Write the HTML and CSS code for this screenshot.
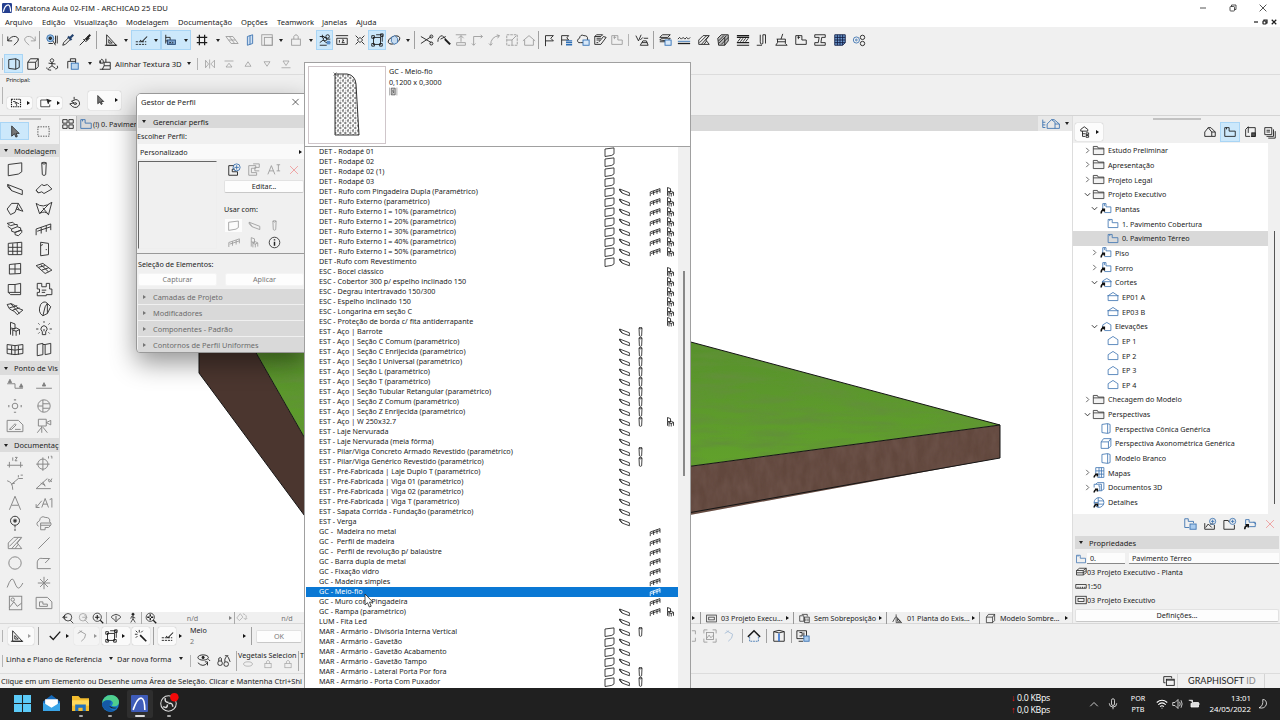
FILE: index.html
```html
<!DOCTYPE html>
<html lang="pt-BR">
<head>
    <meta charset="UTF-8">
    <meta name="viewport" content="width=device-width, initial-scale=1.0">
    <title>Maratona Aula 02-FIM - ARCHICAD 25 EDU</title>
    <link rel="stylesheet" href="styles.css">
</head>
<body>
    <div class="titlebar">
        <i data-icon="app" class="app-icon"></i>
        <span class="title">Maratona Aula 02-FIM - ARCHICAD 25 EDU</span>
        <div class="window-buttons"><i data-icon="minimize"></i><i data-icon="restore"></i><i data-icon="close"></i></div>
    </div>
    <div class="menubar">
        <span class="m1">Arquivo</span><span class="m2">Edição</span><span class="m3">Visualização</span><span class="m4">Modelagem</span><span class="m5">Documentação</span><span class="m6">Opções</span><span class="m7">Teamwork</span><span class="m8">Janelas</span><span class="m9">Ajuda</span>
        <div class="doc-buttons"><i data-icon="minimize"></i><i data-icon="restore"></i><i data-icon="close"></i></div>
    </div>

    <div class="toolbar">
        <b class="grip"></b>
        <div class="group g-undo"><i data-icon="undo"></i><i data-icon="redo" class="off"></i></div>
        <b class="sep"></b>
        <div class="group g-pick"><i data-icon="find"></i><i data-icon="dropper"></i><i data-icon="syringe"></i></div>
        <b class="sep"></b>
        <div class="group g-split"><i data-icon="setsquare"></i><u></u></div>
        <div class="group g-split on"><i data-icon="guide"></i><u></u></div>
        <div class="group g-split on"><i data-icon="snap"></i><u></u></div>
        <div class="group g-split wide"><i data-icon="grid"></i><u></u></div>
        <div class="group g-planes"><i data-icon="plane" class="off"></i><i data-icon="planev" class="blue"></i><i data-icon="frame" class="off"></i></div>
        <u></u>
        <div class="group g-split"><i data-icon="lock" class="off"></i><u></u></div>
        <div class="group g-snap"><i data-icon="trace" class="on"></i><i data-icon="ruler12"></i><i data-icon="corners"></i><i data-icon="group" class="on"></i><i data-icon="orbit"></i></div>
        <u></u>
        <b class="sep"></b>
        <div class="group g-edit"><i data-icon="scissors"></i><i data-icon="adjust"></i><i data-icon="raise" class="off"></i><i data-icon="corner" class="off"></i><i data-icon="arc" class="off"></i><i data-icon="resize" class="off"></i><i data-icon="house" class="off"></i></div>
        <b class="sep"></b>
        <div class="group g-flag"><i data-icon="flag"></i><i data-icon="flaglist"></i><i data-icon="cloud"></i><i data-icon="marker"></i><i data-icon="plan" class="off"></i></div>
        <b class="grip small"></b>
        <div class="group g-one"><i data-icon="vcheck"></i></div>
        <b class="sep"></b>
        <div class="group g-attr"><i data-icon="layers"></i><i data-icon="lines"></i><i data-icon="hatch"></i><i data-icon="hatchcube"></i><i data-icon="composite"></i><i data-icon="profile"></i><i data-icon="brush"></i><i data-icon="plan"></i><i data-icon="ibeam"></i><i data-icon="table"></i><i data-icon="gears"></i></div>
    </div>

    <div class="toolbar second">
        <b class="grip"></b>
        <div class="group g-view"><i data-icon="persp" class="on"></i><i data-icon="box"></i><i data-icon="walk"></i></div>
        <div class="group g-doc"><i data-icon="docview"></i></div>
        <u></u>
        <i data-icon="paint" class="paint"></i>
        <span class="texture">Alinhar Textura 3D</span><u></u>
        <b class="grip later"></b>
        <div class="group g-align off"><i data-icon="mirror"></i><i data-icon="top"></i><i data-icon="up"></i><i data-icon="down"></i><i data-icon="bottom"></i></div>
    </div>

    <div class="infobox">
        <span class="caption">Principal:</span>
        <div class="info-row">
            <b class="grip tall"></b>
            <div class="info-btn"><i data-icon="selection"></i><s></s></div>
            <div class="info-btn"><i data-icon="rectsel"></i><s></s></div>
            <i data-icon="magnet" class="magnet"></i>
            <div class="info-btn big"><i data-icon="cursor"></i><s></s></div>
        </div>
    </div>

    <div class="main">
        <div class="toolbox">
            <div class="handle"></div>
            <div class="tool-grid select"><i data-icon="cursor" class="on"></i><i data-icon="marquee"></i></div>
            <div class="tool-head first"><u></u>Modelagem</div>
            <div class="tool-grid">
                <i data-icon="wall"></i><i data-icon="column"></i>
                <i data-icon="beam"></i><i data-icon="slab"></i>
                <i data-icon="roof"></i><i data-icon="shell"></i>
                <i data-icon="stair"></i><i data-icon="rail"></i>
                <i data-icon="curtain"></i><i data-icon="door"></i>
                <i data-icon="window"></i><i data-icon="skylight"></i>
                <i data-icon="cornerwin"></i><i data-icon="zone"></i>
                <i data-icon="mesh"></i><i data-icon="morph"></i>
                <i data-icon="chair"></i><i data-icon="lamp"></i>
                <i data-icon="curtain2"></i><i data-icon="opening"></i>
            </div>
            <div class="tool-head"><u></u>Ponto de Vis</div>
            <div class="tool-grid grey">
                <i data-icon="section"></i><i data-icon="elevation"></i>
                <i data-icon="interior"></i><i data-icon="detail"></i>
                <i data-icon="worksheet"></i><i data-icon="camera"></i>
            </div>
            <div class="tool-head"><u></u>Documentaç</div>
            <div class="tool-grid grey">
                <i data-icon="dimension"></i><i data-icon="level"></i>
                <i data-icon="radial"></i><i data-icon="angle"></i>
                <i data-icon="text"></i><i data-icon="label"></i>
                <i data-icon="pin"></i><i data-icon="change"></i>
                <i data-icon="hatch"></i><i data-icon="line"></i>
                <i data-icon="circle"></i><i data-icon="polyline"></i>
                <i data-icon="spline"></i><i data-icon="hotspot"></i>
                <i data-icon="figure"></i><i data-icon="drawing"></i>
            </div>
        </div>

        <div class="workspace">
            <div class="tabbar">
                <i data-icon="tiles" class="tiles"></i>
                <div class="tab"><i data-icon="folderplan" class="blue"></i>(!) 0. Pavimen</div>
                <div class="tab-end"><i data-icon="city" class="blue"></i><u></u></div>
            </div>
            <svg class="canvas" viewBox="60 131 1012 481">
                <defs>
                    <filter id="grassNoise" x="0" y="0" width="100%" height="100%">
                        <feTurbulence type="fractalNoise" baseFrequency="0.02 0.12" numOctaves="4" seed="4"/>
                        <feColorMatrix values="0 0 0 0 0.12  0 0 0 0 0.28  0 0 0 0 0.04  0 2.1 0 0 -0.74"/>
                        <feComposite in2="SourceGraphic" operator="in"/>
                    </filter>
                    <filter id="soilNoise" x="0" y="0" width="100%" height="100%">
                        <feTurbulence type="fractalNoise" baseFrequency="0.12 0.05" numOctaves="3" seed="8"/>
                        <feColorMatrix values="0 0 0 0 0.2  0 0 0 0 0.12  0 0 0 0 0.1  0 .7 0 0 -0.2"/>
                        <feComposite in2="SourceGraphic" operator="in"/>
                    </filter>
                    <linearGradient id="grass" x1="0" y1="0" x2="0" y2="1">
                        <stop offset="0" stop-color="#568f2c"/>
                        <stop offset="1" stop-color="#65a82b"/>
                    </linearGradient>
                </defs>
                <g stroke-linejoin="round">
                    <path d="M199 330V373L347 573V512L243 330Z" fill="#4b362f"/>
                    <path d="M347 512L1000 425V458L347 578Z" fill="#61473d"/>
                    <path d="M347 512L1000 425V458L347 578Z" filter="url(#soilNoise)"/>
                    <path d="M243 330L347 512L1000 425L646 330Z" fill="url(#grass)"/>
                    <path d="M243 330L347 512L1000 425L646 330Z" filter="url(#grassNoise)"/>
                    <path d="M199 330V373L347 573L1000 458V425L646 330M243 330L347 512L1000 425M347 512V573" fill="none" stroke="#151515" stroke-width="1"/>
                </g>
            </svg>
            <div class="navbar">
                <div class="nav-icons n1"><i data-icon="zoomback"></i><i data-icon="zoomnext" class="off"></i><i data-icon="zoomin"></i></div>
                <div class="nav-icons n2"><i data-icon="orbit3d"></i><i data-icon="person"></i></div>
                <div class="nav-icons n3"><i data-icon="fit"></i></div>
                <div class="nav-value nd1"><span>n/d</span><s></s></div>
                <div class="nav-value nd2"><i data-icon="rotate"></i><span>n/d</span></div>
                <div class="nav-fill"><s></s></div>
                <div class="nav-option"><i data-icon="frame2"></i><span>03 Projeto Execu...</span><s></s></div>
                <div class="nav-option"><i data-icon="override"></i><span>Sem Sobreposição</span><s></s></div>
                <div class="nav-option"><i data-icon="reno"></i><span>01 Planta do Exis...</span><s></s></div>
                <div class="nav-option"><i data-icon="box"></i><span>Modelo Sombre...</span><s></s></div>
            </div>
        </div>

        <div class="navigator">
            <div class="handle"></div>
            <div class="nav-head">
                <div class="nav-btn"><i data-icon="treeview"></i><s></s></div>
                <div class="nav-tabs"><i data-icon="city2"></i><i data-icon="folderplan" class="on"></i><i data-icon="layout"></i><i data-icon="book"></i></div>
            </div>
            <div class="tree-wrap">
                <div class="tree" id="tree"></div>
                <div class="tree-scroll"><div class="tree-thumb"></div></div>
            </div>
            <div class="tree-actions"><i data-icon="newview"></i><i data-icon="savehouse"></i><i data-icon="newfolder"></i><i data-icon="clone"></i><i data-icon="close" class="red"></i></div>
            <div class="props-head"><u></u>Propriedades</div>
            <div class="props-row first"><i data-icon="folderplan" class="blue"></i><span class="field id">0.</span><span class="field">Pavimento Térreo</span></div>
            <div class="props-row"><i data-icon="layers2"></i>03 Projeto Executivo - Planta</div>
            <div class="props-row"><i data-icon="scale"></i>1:50</div>
            <div class="props-row"><i data-icon="frame2"></i>03 Projeto Executivo</div>
            <div class="button defs">Definições...</div>
        </div>
    </div>

    <div class="control">
        <b class="grip"></b>
        <div class="ctl-btn c1"><i data-icon="setsquare"></i><s class="off"></s></div>
        <b class="sep"></b>
        <div class="ctl-flat"><i data-icon="check"></i><s></s></div>
        <div class="ctl-btn off"><i data-icon="curve"></i><s></s></div>
        <div class="ctl-btn c3"><i data-icon="group"></i><s></s></div>
        <div class="ctl-btn c4"><i data-icon="wand"></i></div>
        <b class="sep"></b>
        <div class="ctl-btn c5"><i data-icon="guide"></i></div><div class="ctl-arrow"><s></s></div>
        <div class="half">Meio<br><em>2</em></div>
        <div class="ctl-arrow"><s></s></div>
        <b class="sep"></b>
        <div class="button ok">OK</div>
        <div class="control-right">
            <i data-icon="frag" class="off"></i><i data-icon="fitbox" class="off"></i><i data-icon="curve" class="off blue"></i>
            <b class="sep"></b><i data-icon="roofline"></i><b class="sep"></b><i data-icon="pipe"></i><b class="sep"></b><i data-icon="panelview"></i>
        </div>
    </div>
    <div class="control lower">
        <b class="grip"></b>
        <span class="ref">Linha e Plano de Referência</span><u></u>
        <span class="shape">Dar nova forma</span><u></u>
        <b class="grip veg-grip"></b>
        <i data-icon="eye" class="big"></i><i data-icon="locks" class="big"></i>
        <div class="veg"><span>Vegetais Selecion</span><div class="off"><i data-icon="oval"></i><i data-icon="lock"></i><i data-icon="lock"></i></div></div>
        <div class="veg last"><span>T</span></div>
    </div>
    <div class="status">
        <span class="hint">Clique em um Elemento ou Desenhe uma Área de Seleção. Clicar e Mantenha Ctrl+Shi</span>
        <i data-icon="windows2"></i>
        <span class="brand">GRAPHISOFT <em>ID</em></span>
    </div>

    <div class="taskbar">
        <div class="task-apps">
            <i data-icon="start"></i><i data-icon="mail"></i><i data-icon="explorer" class="run"></i><i data-icon="edge" class="run"></i><i data-icon="archicad" class="run active"></i><i data-icon="obs" class="run"></i>
        </div>
        <div class="net"><div><em>↓</em>0.0 KBps</div><div><em>↑</em>0,0 KBps</div></div>
        <i data-icon="chevup" class="t-chev"></i><i data-icon="mic" class="t-mic"></i>
        <div class="lang">POR<br>PTB</div>
        <div class="tray"><i data-icon="wifi"></i><i data-icon="sound"></i><i data-icon="battery"></i></div>
        <div class="clock">13:01<br>24/05/2022</div>
        <i data-icon="moon" class="t-moon"></i>
    </div>

    <div class="palette">
        <div class="palette-title">Gestor de Perfil<i data-icon="close"></i></div>
        <div class="palette-head"><u></u>Gerenciar perfis</div>
        <div class="palette-label">Escolher Perfil:</div>
        <div class="palette-select">Personalizado<s></s></div>
        <div class="palette-body">
            <div class="preview"></div>
            <div class="palette-side">
                <div class="side-icons"><i data-icon="profnew"></i><i data-icon="profdup" class="off"></i><i data-icon="rename" class="off"></i><i data-icon="close" class="red"></i></div>
                <div class="button">Editar...</div>
                <div class="use-label">Usar com:</div>
                <div class="use-grid"><i data-icon="wall" class="sel"></i><i data-icon="beam"></i><i data-icon="column"></i><i data-icon="rail"></i><i data-icon="chair"></i><i data-icon="info" class="dark"></i></div>
            </div>
        </div>
        <div class="palette-elements">Seleção de Elementos:</div>
        <div class="palette-buttons"><div class="button">Capturar</div><div class="button">Aplicar</div></div>
        <div class="fold"><s></s>Camadas de Projeto</div>
        <div class="fold"><s></s>Modificadores</div>
        <div class="fold"><s></s>Componentes - Padrão</div>
        <div class="fold"><s></s>Contornos de Perfil Uniformes</div>
    </div>

    <div class="popup">
        <div class="popup-head">
            <svg class="thumb" viewBox="0 0 76 76">
                <defs>
                    <pattern id="concrete" width="5" height="5" patternUnits="userSpaceOnUse">
                        <path d="M0 1L2 0L2 2ZM3 3L5 2.500L4 5ZM1 4H2M4 .5V1" fill="#aaa" stroke="#555" stroke-width=".5"/>
                    </pattern>
                </defs>
                <path d="M26 7H38Q46 8 47 17L50 68H26Z" fill="url(#concrete)" stroke="#333" stroke-width="1"/>
                <path d="M24.500 5.500L27.500 8.500M27.500 5.500L24.500 8.500" stroke="#333" stroke-width=".6"/>
            </svg>
            <div class="popup-info">
                <div>GC - Meio-fio</div>
                <div>0,1200 x 0,3000</div>
                <i data-icon="section-mark"></i>
            </div>
        </div>
        <div class="popup-body">
            <div class="profiles" id="profiles"></div>
            <div class="popup-scroll"><div class="popup-thumb"></div></div>
        </div>
        <svg class="pointer" viewBox="0 0 10 15"><path d="M1 1V12L3.500 9.700L5.300 14L7.200 13.200L5.500 9.200H9Z" fill="#fff" stroke="#222" stroke-width=".8"/></svg>
    </div>

    <script src="script.js"></script>
</body>
</html>
```

FILE: styles.css
```css
* {
    box-sizing: border-box;
}
body {
    margin: 0;
    width: 1280px;
    height: 720px;
    overflow: hidden;
    display: flex;
    flex-direction: column;
    position: relative;
    background: #f0f0f0;
    color: #1c1c1c;
    font-family: "Noto Sans", "Open Sans", sans-serif;
    font-size: 7.2px;
    line-height: 10px;
    white-space: nowrap;
}
i {
    display: flex;
    flex: none;
    align-items: center;
    justify-content: center;
    font-style: normal;
}
i svg {
    width: 14px;
    height: 14px;
    fill: none;
    stroke: currentColor;
    stroke-width: 1;
    display: block;
}
em {
    font-style: normal;
}
/* arrow down */
u {
    flex: none;
    width: 10px;
    display: flex;
    justify-content: center;
    align-items: center;
}
u::before {
    content: "";
    border: 2.5px solid transparent;
    border-top: 3.5px solid #222;
    border-bottom: 0;
}
/* arrow right */
s {
    flex: none;
    width: 8px;
    display: flex;
    justify-content: center;
    align-items: center;
}
s::before {
    content: "";
    border: 2.5px solid transparent;
    border-left: 3px solid #111;
    border-right: 0;
}
.off {
    opacity: .4;
}
.blue {
    color: #3c72b0;
}
.red {
    color: #ef9a9a;
}
.on {
    background: #cce8fb;
    outline: 1px solid #a9d5f5;
    outline-offset: -1px;
}
.sep {
    flex: none;
    width: 1px;
    height: 18px;
    background: #a0a0a0;
}
.grip {
    flex: none;
    width: 1px;
    height: 12px;
    margin: 0 2px;
    background: #b4b4b4;
}
.button {
    background: #fdfdfd;
    border: 1px solid #e2e2e2;
    border-bottom-color: #c8c8c8;
    border-radius: 2px;
    height: 13px;
    line-height: 11px;
    text-align: center;
}

/* title and menu */
.titlebar {
    flex: none;
    height: 15px;
    background: #fff;
    display: flex;
    align-items: center;
    font-size: 7.7px;
}
.app-icon {
    margin: 0 3px 0 2px;
}
.app-icon svg {
    width: 10px;
    height: 10px;
}
.window-buttons {
    margin-left: auto;
    display: flex;
    gap: 16px;
    margin-right: 10px;
}
.window-buttons svg {
    height: 12px;
}
.menubar {
    flex: none;
    height: 12px;
    background: #fff;
    display: flex;
    align-items: center;
    line-height: 12px;
    font-size: 7.6px;
    padding: 1px 0 0 5px;
}
.m1 { width: 37px; }
.m2 { width: 32px; }
.m3 { width: 52px; }
.m4 { width: 52px; }
.m5 { width: 63px; }
.m6 { width: 36px; }
.m7 { width: 45px; }
.m8 { width: 34px; }
.doc-buttons {
    margin-left: auto;
    display: flex;
    gap: 1px;
    margin-right: 2px;
}
.doc-buttons svg {
    width: 8px;
    height: 8px;
    stroke-width: 2.4;
}

/* toolbars */
.toolbar {
    flex: none;
    height: 26px;
    display: flex;
    align-items: center;
}
.group {
    flex: none;
    display: flex;
    height: 20px;
    align-items: stretch;
}
.group > i {
    flex: 1;
}
.g-undo { width: 33px; }
.g-pick { width: 54px; padding: 0 2px 0 3px; }
.g-split { width: 30px; }
.g-split.wide { width: 32px; }
.toolbar .sep + .g-split { margin-left: 3px; width: 30px; }
.g-planes { width: 53px; }
.g-snap { width: 87px; }
.toolbar > .sep { margin: 0 1px; }
.g-edit { width: 118px; margin-left: 3px; }
.g-flag { width: 86px; padding-right: 1px; }
.g-one { width: 21px; }
.g-attr { width: 214px; }
.second {
    height: 21px;
}
.second .group {
    height: 19px;
}
.g-view { width: 57px; margin-left: -1px; }
.g-doc { width: 24px; }
.paint {
    width: 19px;
}
.texture {
    font-size: 7.7px;
    width: 69px;
    margin-left: 1px;
}
.later {
    margin-left: 3px;
}
.g-align {
    width: 96px;
}
.g-align svg {
    width: 12px;
}
.infobox {
    flex: none;
    height: 42px;
    border-top: 1px solid #dcdcdc;
    border-bottom: 1px solid #d4d4d4;
}
.caption {
    display: block;
    padding-left: 6px;
    font-size: 6px;
    letter-spacing: -.2px;
    line-height: 11px;
}
.info-row {
    display: flex;
    align-items: center;
    height: 28px;
}
.tall {
    height: 17px;
    margin-top: -10px;
}
.info-btn {
    display: flex;
    align-items: center;
    width: 25px;
    height: 12px;
    margin: 5px 3px 0 2px;
    background: #fbfbfb;
    border-radius: 2px;
    box-shadow: 0 0 1px #999;
}
.info-btn i {
    width: 17px;
}
.info-btn svg {
    height: 12px;
}
.magnet {
    width: 20px;
    margin: 5px 3px 0 0;
}
.info-btn.big {
    width: 33px;
    height: 19px;
    margin: 0;
}
.info-btn.big i {
    width: 24px;
}

/* main area */
.main {
    flex: none;
    height: 508px;
    display: flex;
    border-bottom: 1px solid #d8d8d8;
}
.toolbox {
    width: 60px;
    border-right: 1px solid #dcdcdc;
    overflow: hidden;
}
.handle {
    width: 22px;
    height: 2px;
    margin: 2px auto 0;
    background: #c2c2c2;
}
.tool-grid {
    display: grid;
    grid-template-columns: 29px 29px;
    grid-auto-rows: 20px;
    margin-bottom: 2px;
    color: #333;
}
.tool-grid svg {
    width: 18px;
    height: 18px;
    stroke-width: .85;
}
.tool-grid.grey {
    color: #858585;
    margin-top: 1px;
}
.tool-grid.select {
    grid-auto-rows: 18px;
    margin: 2px 0 4px;
}
.select svg {
    width: 15px;
    height: 15px;
}
.tool-head {
    height: 14px;
    display: flex;
    align-items: center;
    background: #dcdcdc;
    overflow: hidden;
    padding-left: 1px;
    font-size: 7.5px;
}
.tool-head.first {
    height: 13px;
    margin-bottom: 2px;
}
.tool-head u {
    margin-right: 3px;
}
.workspace {
    width: 1012px;
    display: flex;
    flex-direction: column;
}
.tabbar {
    height: 15px;
    display: flex;
    flex: none;
}
.tiles {
    width: 17px;
    border-right: 1px solid #bbb;
}
.tab {
    flex: 1;
    background: #d9d9d9;
    display: flex;
    align-items: center;
    font-size: 7.2px;
    padding-left: 2px;
}
.tab-end {
    width: 34px;
    display: flex;
    align-items: center;
    justify-content: space-between;
    background: #e8e8e8;
    padding-left: 4px;
}
.tab-end svg {
    width: 19px;
}
.canvas {
    width: 1012px;
    height: 481px;
    flex: none;
    background: #fff;
}
.navbar {
    flex: 1;
    display: flex;
    align-items: center;
}
.nav-icons {
    display: flex;
    height: 12px;
    border-right: 1px solid #aaa;
}
.nav-icons i {
    flex: 1;
}
.nav-icons svg {
    width: 12px;
    height: 12px;
}
.n1 { width: 47px; }
.n2 { width: 35px; }
.n3 { width: 17px; border: 0; }
.nav-value {
    display: flex;
    align-items: center;
    height: 12px;
    color: #777;
}
.nav-value span {
    flex: 1;
    text-align: center;
}
.nd1 { width: 76px; border-right: 1px solid #aaa; }
.nd2 { width: 90px; }
.nd1 s, .nd2 i { opacity: .5; }
.nav-fill {
    flex: 1;
    display: flex;
    justify-content: flex-end;
    padding-right: 3px;
}
.nav-option {
    width: 93px;
    height: 12px;
    border-left: 1px solid #999;
    display: flex;
    align-items: center;
    padding-left: 5px;
}
.nav-option span {
    width: 66px;
    padding-left: 4px;
}
.nav-option svg {
    width: 11px;
    height: 11px;
}

/* navigator */
.navigator {
    width: 208px;
    border-left: 1px solid #ddd;
}
.navigator .handle {
    width: 48px;
}
.nav-head {
    display: flex;
    align-items: center;
    justify-content: space-between;
    height: 23px;
}
.nav-btn {
    width: 28px;
    height: 18px;
    margin-left: 2px;
    display: flex;
    align-items: center;
    padding-left: 4px;
    background: #fcfcfc;
    border-radius: 2px;
    box-shadow: 0 0 1px #999;
}
.nav-tabs {
    display: flex;
}
.nav-tabs i {
    width: 20px;
    height: 20px;
}
.tree-wrap {
    display: flex;
    height: 371px;
}
.tree {
    width: 195px;
    background: #fff;
}
.tree-row {
    height: 14.67px;
    display: flex;
    align-items: center;
    font-size: 7.2px;
}
.tree-row.current {
    background: #d9d9d9;
}
.level0 { padding-left: 9px; }
.level1 { padding-left: 16px; }
.level2 { padding-left: 23px; }
.tree-row i {
    width: 14px;
    margin-right: 2px;
}
.tree-row svg {
    width: 14px;
    height: 13px;
}
.tree-row .chev {
    width: 10px;
    margin: 0;
}
.tree-row .chev svg {
    width: 7px;
    height: 7px;
    stroke-width: 2;
}
.tree-scroll {
    flex: 1;
    padding: 88px 0 0 6px;
}
.tree-thumb {
    width: 1px;
    height: 273px;
    background: #555;
}
.tree-actions {
    height: 22px;
    display: flex;
    justify-content: flex-end;
    padding: 0 0 2px;
}
.tree-actions i {
    width: 20px;
}
.props-head {
    height: 13px;
    margin: 0 1px 3px 2px;
    background: #d9d9d9;
    display: flex;
    align-items: center;
    font-size: 7.5px;
}
.props-head u {
    margin: 0 3px 0 1px;
}
.props-row {
    height: 14px;
    display: flex;
    align-items: center;
    padding-left: 1px;
    font-size: 7.2px;
}
.props-row i {
    width: 13px;
}
.props-row svg {
    width: 12px;
    height: 12px;
}
.props-row.first {
    height: 13px;
}
.field {
    flex: 1;
    height: 11px;
    background: #fcfcfc;
    border-bottom: 1px solid #888;
    padding-left: 3px;
    margin: 0 1px 0 3px;
}
.field.id {
    flex: none;
    width: 38px;
    margin-left: 0;
}
.defs {
    margin: 2px 1px 0 2px;
}

/* lower bars */
.control {
    flex: none;
    height: 24px;
    display: flex;
    align-items: center;
}
.ctl-btn, .ctl-flat {
    display: flex;
    align-items: center;
    height: 18px;
    width: 25px;
    margin-right: 3px;
}
.ctl-btn {
    background: #fafafa;
    box-shadow: 0 0 1px #999;
    border-radius: 2px;
}
.ctl-btn i, .ctl-flat i {
    width: 17px;
}
.control > .sep {
    margin: 0 4px 0 3px;
}
.c1 { margin: 0 1px 0 3px; width: 26px; }
.control .ctl-flat { margin: 0 3px 0 3px; }
.c3 { width: 28px; margin-right: 2px; }
.c4 { width: 18px; margin: 0; }
.c5 { width: 18px; margin: 0; }
.ctl-arrow {
    width: 8px;
    height: 16px;
    display: flex;
}
.half {
    width: 53px;
    margin-left: 3px;
    padding-left: 3px;
    line-height: 11px;
}
.half em {
    color: #777;
}
.ok {
    width: 46px;
    color: #777;
}
.control-right {
    margin-left: 379px;
    display: flex;
    align-items: center;
}
.control-right i {
    width: 19.5px;
}
.control-right .sep {
    margin: 0 2px;
    height: 14px;
}
.lower {
    height: 25px;
}
.ref { width: 101px; padding-left: 1px; }
.shape { width: 60px; padding-left: 1px; }
.ref, .shape {
    font-size: 7.4px;
    margin-top: -4px;
}
.lower u {
    margin-top: -4px;
}
.veg-grip {
    margin: 0 3px 0 4px;
}
.lower .big {
    width: 20px;
    margin-top: 1px;
}
.veg {
    width: 62px;
    height: 20px;
    border-left: 1px solid #aaa;
    padding-left: 1px;
    margin-left: 2px;
    line-height: 9px;
}
.veg.last {
    width: 20px;
    margin: 0;
}
.veg div {
    display: flex;
    height: 9px;
}
.veg i {
    width: 20px;
}
.veg svg {
    width: 10px;
    height: 10px;
}
.status {
    flex: none;
    height: 15px;
    border-top: 1px solid #dcdcdc;
    display: flex;
    align-items: center;
    font-size: 7.5px;
}
.hint {
    padding-left: 1px;
    width: 1162px;
}
.brand {
    border: 1px solid #d4d4d4;
    border-width: 0 1px;
    margin-left: 1px;
    width: 88px;
    padding-left: 10px;
    font-family: Lato, sans-serif;
    font-size: 9.1px;
    line-height: 14px;
}
.brand em {
    color: #888;
}

/* windows taskbar */
.taskbar {
    flex: none;
    height: 32px;
    background: #202020;
    color: #fff;
    display: flex;
    align-items: center;
}
.task-apps {
    display: flex;
    padding-left: 9px;
}
.task-apps i {
    width: 26px;
    height: 28px;
    margin-right: 3.4px;
    flex-direction: column;
    justify-content: flex-start;
    padding-top: 5px;
}
.task-apps svg {
    width: 17px;
    height: 17px;
    stroke: none;
    overflow: visible;
}
.run::after {
    content: "";
    width: 4px;
    height: 2px;
    margin-top: 3px;
    border-radius: 1px;
    background: #aaa;
}
.active {
    background: #2e2e2e;
    border-radius: 2px;
}
.active::after {
    width: 10px;
    background: #ddd;
}
.net {
    margin-left: auto;
    width: 73px;
    font-family: "Open Sans", sans-serif;
    font-size: 8.8px;
    line-height: 12px;
    letter-spacing: -.3px;
}
.net em {
    color: #f01818;
    display: inline-block;
    width: 6px;
    font-weight: bold;
}
.t-chev, .t-mic { width: 19px; }
.lang {
    width: 32px;
    text-align: center;
    line-height: 11px;
}
.tray {
    display: flex;
}
.tray i {
    width: 16px;
}
.tray svg, .t-mic svg, .t-chev svg {
    width: 12px;
    height: 12px;
}
.clock {
    width: 49px;
    text-align: right;
    font-size: 7.8px;
    line-height: 11px;
}
.t-moon {
    width: 29px;
    padding-right: 8px;
}
.t-moon svg {
    width: 12px;
    height: 12px;
}

/* profile manager palette */
.palette {
    position: absolute;
    left: 136px;
    top: 93px;
    width: 170px;
    height: 260px;
    background: #f0f0f0;
    border: 1px solid #999;
    border-radius: 5px 0 0 4px;
    box-shadow: 0 10px 26px rgba(0, 0, 0, .42);
    overflow: hidden;
    padding: 0 1px;
    font-size: 7.2px;
}
.palette-title {
    height: 21px;
    margin: 0 -1px;
    padding: 0 4px 5px;
    background: #fff;
    display: flex;
    justify-content: space-between;
    align-items: center;
    font-size: 7.5px;
}
.palette-title svg {
    width: 11px;
}
.palette-head, .fold {
    height: 13px;
    background: #d9d9d9;
    display: flex;
    align-items: center;
    font-size: 7.4px;
}
.palette-head u {
    margin: 0 4px 0 1px;
}
.palette-label {
    line-height: 16px;
    height: 16px;
    margin-left: -1px;
}
.palette-select {
    background: #fafafa;
    height: 15px;
    display: flex;
    align-items: center;
    justify-content: space-between;
    padding-left: 2px;
}
.palette-body {
    display: flex;
    height: 95px;
    padding-top: 2px;
    border-bottom: 1px solid #999;
}
.preview {
    width: 79px;
    height: 88px;
    border: 1px solid #eee;
    border-top-color: #666;
    border-left-color: #666;
}
.palette-side {
    flex: 1;
    padding-left: 7px;
}
.side-icons {
    display: flex;
    height: 17px;
    margin-bottom: 2px;
}
.side-icons i {
    width: 20px;
}
.palette-side .button {
    margin-right: 1px;
}
.use-label {
    line-height: 10px;
    margin: 11px 0 3px;
}
.use-grid {
    display: grid;
    grid-template-columns: 20px 20px 20px;
    grid-auto-rows: 17px;
    color: #999;
}
.use-grid svg {
    width: 13px;
    height: 13px;
}
.use-grid .sel {
    background: #fcfcfc;
    margin: 2px 2px 2px 1px;
}
.use-grid .dark {
    color: #222;
}
.palette-elements {
    line-height: 20px;
    height: 19px;
}
.palette-buttons {
    display: flex;
    gap: 8px;
    height: 16px;
    color: #777;
}
.palette-buttons .button {
    width: 79px;
    border-color: #f4f4f4;
}
.fold {
    height: 15px;
    margin-bottom: 1px;
    color: #6c6c6c;
}
.fold s {
    margin: 0 5px 0 2px;
    opacity: .5;
}
.palette-body, .palette-elements {
    margin: 0 -1px;
    padding-left: 1px;
}

/* profile popup */
.popup {
    position: absolute;
    left: 304px;
    top: 62px;
    width: 387px;
    height: 626px;
    background: #fff;
    border: 1px solid #a0a0a0;
    border-bottom: 0;
    display: flex;
    flex-direction: column;
}
.popup-head {
    height: 84px;
    flex: none;
    border-bottom: 1px solid #a0a0a0;
    display: flex;
    padding: 3px;
}
.thumb {
    width: 78px;
    height: 78px;
    border: 1px solid #cfc6ca;
}
.popup-info {
    padding-left: 3px;
    line-height: 11px;
}
.popup-info svg {
    width: 9px;
    height: 9px;
}
.popup-info i {
    justify-content: flex-start;
    margin-top: -1px;
}
.popup-body {
    flex: 1;
    display: flex;
}
.profiles {
    flex: 1;
    min-width: 0;
    padding-left: 1px;
}
.profile-row {
    height: 10px;
    line-height: 9px;
    display: flex;
    align-items: center;
    padding-left: 13px;
}
.profile-row span {
    flex: none;
    width: 283px;
    height: 10px;
    white-space: pre;
}
.profile-row i {
    width: 15.3px;
}
.profile-row svg {
    width: 15px;
    height: 12px;
    stroke-width: 1.1;
}
.profile-row.hover {
    background: #0a78d4;
    color: #fff;
}
.popup-scroll {
    flex: none;
    width: 12px;
    background: #f0f0f0;
    padding: 124px 0 0 5px;
}
.popup-thumb {
    width: 2px;
    height: 205px;
    background: #888;
}
.pointer {
    position: absolute;
    left: 59px;
    top: 530px;
    width: 10px;
    height: 15px;
}
```

FILE: script.js
```js
// Icons, drawn on a 16x16 grid
var B = 'stroke="#3c72b0"';
var icons = {
    app: '<rect width="16" height="16" rx="2" fill="#243f8f" stroke="none"/><path d="M2 14Q5 3 10 3Q13 3 14 14" stroke="#fff" stroke-width="2"/>',
    minimize: '<path d="M4 8H12"/>',
    restore: '<rect x="4" y="6" width="6" height="6" rx="1"/><path d="M6 6V4H12V10H10"/>',
    close: '<path d="M3.500 3.500L12.500 12.500M12.500 3.500L3.500 12.500"/>',
    undo: '<path d="M2 4V9H7M2 9Q6 3 11 4Q16 6 13 10L9 14"/>',
    redo: '<path d="M14 4V9H9M14 9Q10 3 5 4Q0 6 3 10L7 14"/>',
    find: '<circle cx="6" cy="6" r="4" fill="#9cc3e6" stroke="#3c72b0"/><circle cx="6" cy="6" r="1.500" fill="#333"/><path d="M9 9L12 14M12 3V12M14 3V12M4 12H9"/>',
    dropper: '<path d="M2 14L3 11L9 5L11 7L5 13Z"/><path d="M8 4L12 8M10 6L14 2" stroke-width="2.500" stroke="#24436e"/>',
    syringe: '<path d="M2 14L8 8M6 7L9 10M7 8L11 4L13 6L9 10" /><path d="M11 5L14 2M9 8L12 5" stroke-width="2.200"/>',
    setsquare: '<path d="M3 2V14H14Z M5.500 7.500V11.500H9.500Z"/><path d="M1 14H15"/>',
    guide: '<path d="M2 10H14M2 13H14" stroke-dasharray="2.500 1" /><path d="M7 8L9 10L15 4" stroke="#222" stroke-width="1.200"/>',
    snap: '<path d="M2 2V12M2 5H7V9H2" /><rect x="4" y="8" width="9" height="5" fill="#7fa9d6" stroke="#24436e"/><path d="M6 10L8 12M8 10L6 12M10 10V12"/>',
    grid: '<path d="M5 2V14M11 2V14M2 5H14M2 11H14" stroke-width="1.400"/>',
    plane: '<path d="M1 4H9L15 12H7ZM4 8H12M5 4L11 12"/>',
    planev: '<path d="M5 4L11 2V12L5 14ZM8 3V13" fill="#cfe0f2"/>',
    frame: '<rect x="2" y="2" width="12" height="12"/><rect x="5" y="5" width="9" height="9"/>',
    lock: '<rect x="3" y="7" width="10" height="7"/><path d="M5.500 7V4Q8 0 10.500 4V7"/>',
    trace: '<path d="M2 4H7L10 7H14M2 11L6 8L9 11H14M2 14H10M5 2V6" /><circle cx="8" cy="7" r="2"/><circle cx="11" cy="4" r="2"/><rect x="10" y="9" width="4" height="4" fill="#5b8fca" stroke="none"/>',
    ruler12: '<path d="M1 3H15M2 6H14V13H2ZM5 8V11M8 8H10L8 11H11"/>',
    corners: '<path d="M3 3L6 6M13 3L10 6M3 13L6 10M13 13L10 10M5 8L8 5L11 8L8 11Z"/>',
    group: '<rect x="4" y="5" width="8" height="8"/><path d="M7 2H14V10M2 3H5V6H2ZM11 12H14V15H11ZM2 12H5V15H2ZM12 1H15V4H12Z"/>',
    orbit: '<ellipse cx="8" cy="8" rx="7" ry="4" transform="rotate(-25 8 8)"/><path d="M5 5L9 3L12 6V11L8 13L5 10Z" stroke="#3c72b0" fill="#c7dcf0"/>',
    scissors: '<path d="M1 4L13 11M1 12L13 4"/><circle cx="13" cy="4" r="1.700"/><circle cx="13" cy="12" r="1.700"/>',
    adjust: '<path d="M1 10Q1 4 6 3L10 7M4 7L10 4" /><path d="M9 7L15 13" stroke-width="2.400"/>',
    raise: '<path d="M2 2H14M8 3V10M5 6L8 3L11 6M3 11H13V14H3Z"/>',
    corner: '<path d="M3 14V4H13M11 2L13 4L11 6M1 12L3 14L5 12"/>',
    arc: '<path d="M3 14Q3 4 13 3M10 2L13 3L11 6M1 12L3 14L5 12"/>',
    resize: '<rect x="2" y="2" width="12" height="12" stroke-dasharray="3 1"/><path d="M2 8H8V14M8 8L13 3"/>',
    house: '<path d="M1 9L8 3L15 9M3 8V14H13V8"/>',
    flag: '<path d="M4 15V3H13L10 6L13 9H4"/>',
    flaglist: '<path d="M3 14V3H11L9 5.500L11 8H3"/><path d="M8 9H15M8 11H15M8 13.500H15" stroke="#2f6fb5" stroke-width="1.600"/>',
    cloud: '<path d="M3 11Q0 8 4 6Q5 1 9 3Q14 3 13 7Q15 9 12 11H5Z"/><rect x="8" y="8" width="7" height="6" fill="#d8e8f8" stroke="#2f6fb5"/>',
    marker: '<path d="M2 4L4 2H11L9 4ZM2 4V13H9L15 5L12 4L7 10M4 6H9M4 8H8M4 11H6"/>',
    plan: '<path d="M2 3H9V8H14V13H2ZM5 3V7M4 5H7"/>',
    vcheck: '<path d="M1 3L4 9L7 2M6 8L9 5M10 6H15M6 14L9 9L13 9L15 14ZM8 11H14"/>',
    layers: '<path d="M2 5L5 2H14L11 5ZM2 8L4 6H14L11 9ZM2 10H8"/><rect x="8" y="8" width="7" height="6" fill="#d8e8f8" stroke="#2f6fb5"/>',
    lines: '<path d="M1 7L3 5L5 7L7 5L9 7L11 5L13 7L15 5"/><path d="M1 9.500H15" stroke="#2f6fb5"/><path d="M1 12H15" stroke-width="1.500"/>',
    hatch: '<path d="M2 13V8L7 3H14L10 8L14 13Z M3 11L11 3M5 13L13 4M8 13L11 9"/>',
    hatchcube: '<path d="M2 6L6 2H14V9L10 14H3Z M3 9L9 3M3 12L12 3M6 13L14 5M10 5V14" fill="#bbb"/>',
    composite: '<path d="M1 3H15M1 5H15M1 11H15M1 14H15" stroke-width="1.200"/><path d="M2 10L5 6M5 10L8 6M8 10L11 6M11 10L14 6"/>',
    profile: '<path d="M6 2V10Q6 14 9 12V2H12V12M2 14H8"/>',
    brush: '<path d="M10 1L8 7M3 7H13V12L15 14H2L4 11V7M4 10H13"/>',
    ibeam: '<path d="M2 2H14V5H10L9 11H14V14H2V11H6L7 5H2Z"/>',
    table: '<path d="M2 2H14V11L11 14H2Z" fill="#6e9bd0" stroke="#111c44"/><path d="M2 5H14M2 8H14M2 11H14M5 2V14M8 2V14M11 2V14" stroke="#111c44"/>',
    gears: '<circle cx="5" cy="8" r="3.500" stroke="#3c72b0"/><circle cx="5" cy="8" r="1" stroke="#3c72b0"/><circle cx="12" cy="5" r="2.500"/><circle cx="12" cy="12" r="2.500"/>',
    persp: '<path d="M2 3L10 2V14L2 13ZM10 2L14 4V12L10 14" />',
    box: '<path d="M2 6L5 2H14V11L11 14H2ZM2 6H11V14M11 6L14 2"/>',
    walk: '<path d="M8 2A2 2 0 1 1 7.900 2M8 6V10M4 7L12 8M8 10L4 13M8 10L12 13M2 12Q2 15 7 15M14 10Q16 13 12 14"/>',
    docview: '<path d="M2 13V5H5V2H11V8M5 5H11"/><rect x="6" y="7" width="8" height="7" fill="#bdd7ef" stroke="#2f6fb5"/>',
    paint: '<path d="M3 7V4Q4 1 6 4V7H2V4M9 2V6M7 6H14V10H7ZM7 10L5 14H14V10M2 14H6"/>',
    mirror: '<path d="M2 3V13L6 8ZM14 3V13L9 8ZM7.500 2V14"/>',
    top: '<path d="M2 4H14M8 7L12 12H4Z"/>',
    up: '<path d="M8 5L12 11H4Z"/>',
    down: '<path d="M8 11L12 5H4Z"/>',
    bottom: '<path d="M2 13H14M8 10L12 4H4Z"/>',
    selection: '<rect x="2" y="3" width="12" height="10" stroke-dasharray="2 1" stroke-width="1.500"/><path d="M4 6H7V9M9 12L8 7L12 9"/>',
    rectsel: '<path d="M9 4H1V13H13V10"/><path d="M9 3L15 5L12 6L11 9Z" fill="#222"/>',
    magnet: '<path d="M4 6L9 4Q14 5 13 10Q10 15 5 12L2 9L6 8Q7 11 10 9Q10 7 7 8ZM7 4V1"/>',
    cursor: '<path d="M5 2V13L8 10.500L9.500 14L11 13.200L9.700 10H13Z" fill="#777" stroke="#222"/>',
    marquee: '<rect x="2" y="3" width="12" height="10" stroke-dasharray="1.500 1.200"/>',
    wall: '<path d="M2 4L14 2.500V10.500L11 12.500L2 14Z"/>',
    column: '<path d="M6 2.500Q8 1.500 10 2.500L9.500 13Q8 14.500 6.500 13ZM6 2.500Q8 5 10 2.500"/>',
    beam: '<path d="M1.500 4L14.500 9V13L5 9.500ZM1.500 4V6L5 9.500"/>',
    slab: '<path d="M1 9L6 4L8 5L11 4L15 8L8 12L6 10.500L3 11.500ZM1 9L3 11.500"/>',
    roof: '<path d="M1 8L5 3H11L8 11L4 13ZM11 3L15 10L12 9L10 6M9 8L12 9"/>',
    shell: '<path d="M1 3Q7 8 15 2L12 13Q9 9 4 12ZM4 12L12 4M7 7L12 13"/>',
    stair: '<path d="M1 3L6 2L8 4L4 5ZM2 5V6L5 8L10 6V4L8 4M5 8V10L8 11L13 9V7L10 6M8 11V13L11 14L14 11V9L8 11"/>',
    rail: '<path d="M1 8L14 3.500M1 8V13.500M2 10L14 6M5.500 6.500V12M10 5V10.500M14 3.500V9"/>',
    curtain: '<path d="M2 3L14 2V13L2 13ZM6 3V13M10 2.500V13M2 6.500H14M2 10H14"/>',
    door: '<path d="M5 2L12 3V13L5 14ZM10 8V9M5 5L7 4"/>',
    window: '<path d="M3 4L13 3V12L3 12.500ZM8 3.500V12M3 8H13"/>',
    skylight: '<path d="M1 5L7 3L15 9L9 12ZM3 6.500L9 5M6 9L12 7M5 4L12 10.500"/>',
    cornerwin: '<path d="M2 4H8V11H2ZM8 4L13 3V11H8M2 11L4 13H13V11"/>',
    zone: '<path d="M2 3H6V6H10V3H13V8H15V13H10V14H2V11H4V8H2ZM6 9H10M6 11H9"/>',
    mesh: '<path d="M1 4Q5 2 8 5T15 9L10 13Q7 9 5 9T1 4M4 3L12 12M3 7L10 5M6 9L12 7"/>',
    morph: '<path d="M5 4Q8 0 11 3V12L7 14Q2 11 5 4M11 3L14 6L11 12M7 14L9 6L11 3"/>',
    chair: '<path d="M4 2L8 3.500V8L4 7ZM4 7V13M6 9V14M5 8.500L9 7L12 8.500V13M9 9.500V14M6 9L9 10L12 8.500"/>',
    lamp: '<path d="M6.500 10.500Q4 8 6 6Q8 4 10 6Q12 8 9.500 10.500V13H6.500ZM8 1V2.500M3 3L4 4M13 3L12 4M1 8H3M13 8H15M3 12L4 11M13 12L12 11M8 8V10"/>',
    curtain2: '<path d="M1 4Q8 6 15 4V12Q8 14 1 12ZM5 5V13M11 5V13M1 8Q8 10 15 8M8 5V13"/>',
    opening: '<path d="M2 4L7 3V13L2 14ZM9 4L14 3V12L9 13ZM7 4H9"/>',
    section: '<path d="M1 6H8V10H15"/><path d="M2 5L3.500 2L5 5ZM12 9L13.500 6L15 9Z" fill="#777"/>',
    elevation: '<path d="M1 10H15M6.500 8L8 5L9.500 8Z" fill="#777"/>',
    interior: '<circle cx="8" cy="8" r="2.500"/><path d="M8 3V2M8 13V14M2 8H3M13 8H14" stroke-width="2"/>',
    detail: '<circle cx="8" cy="8" r="5.500"/><path d="M7 2.500V13.500M7 6H13M7 10H13M2.500 8H7"/>',
    worksheet: '<path d="M1 3H11L15 7V13H1ZM3 11L8 6L9 7L5 11ZM8 11H13"/>',
    camera: '<path d="M3 2H10V8H3ZM10 5L14 3V7ZM6 8V14M6 9L2 14M7 9L11 14"/>',
    dimension: '<path d="M1 10H15M3 7V12M13 7V12M6 3V6M8 3H10L8 6H10"/>',
    level: '<circle cx="7" cy="9" r="4.500"/><path d="M1 9H13M7 3V15M12 2V4M14 2H15V4"/>',
    radial: '<path d="M1 6Q6 7 6 14M5 9L11 4H15M11 1V3M13 1H15M5 9L8 8"/>',
    angle: '<path d="M14 13H1L11 4M7 7L9 11M5 8L9 10M15 4Q13 9 12 6T15 7"/>',
    text: '<path d="M3 14L8 2L13 14M5 10H11"/>',
    label: '<path d="M1 12L6 6M1 12V9M1 12H4M6 12L9 4L12 12M7 9H11M13 5L15 4V12"/>',
    pin: '<circle cx="8" cy="6" r="4" stroke="#333"/><circle cx="8" cy="6" r="1.500" fill="#333"/><path d="M8 10V12M8 13V15" stroke="#333"/>',
    change: '<path d="M3 11Q0 8 4 6Q5 1 9 3Q14 3 13 7Q16 9 12 12H9V14H5V8H14M5 10H14"/>',
    line: '<path d="M3 13L13 3"/>',
    circle: '<circle cx="8" cy="8" r="5.500"/>',
    polyline: '<path d="M14 13H2V7Q3 3 7 4H13L9 8"/>',
    spline: '<path d="M1 12Q5 1 7 6T10 12Q12 14 15 8"/>',
    hotspot: '<path d="M8 2.500V13.500M2.500 8H13.500M4.500 4.500L11.500 11.500M11.500 4.500L4.500 11.500"/>',
    figure: '<rect x="3" y="2" width="11" height="12"/><path d="M3 12L7 7L10 11L14 8"/><circle cx="6" cy="5" r="1.500"/>',
    drawing: '<path d="M1 3H11L15 7V13H1ZM4 11V7H7V9H11V11Z"/>',
    tiles: '<path d="M2 3H7V7H2ZM9 3H14V7H9ZM2 9H7V13H2ZM9 9H14V13H9Z"/>',
    folderplan: '<path d="M2 3H7V7H14V13H2ZM4 3V5"/>',
    city: '<path d="M-2 3V12M-2 6H1M-2 9H1M-2 12H1M3 13V8L8 3L12 6V13ZM8 3H11L17 8V13H12M12 8L17 8"/>',
    city2: '<path d="M2 13V8L6 3L10 8V13ZM6 3H9L14 8V13H10M10 8H14"/>',
    treeview: '<path d="M2 5L6 2L10 5V7H2ZM4 7V13H7M4 10H7M8 9H11V11H8ZM8 12H11V14H8Z"/>',
    layout: '<path d="M3 5V13H8M3 5L6 2V9M6 3H14V13H9"/><rect x="10" y="9" width="4" height="4" fill="#555"/>',
    book: '<path d="M2 3H10V11H2ZM4 13H12V5M6 15H14V7M4 6H8M4 8H8"/>',
    folder: '<path d="M1 13V3H6L7 5H14V13ZM1 6H14" fill="#f2f2f2" stroke="#333"/>',
    planlink: '<path d="M4 9V2H8V6H14V13H6M6 2V5" ' + B + '/><path d="M2 14Q2 10 6 9M3 9H6V12" stroke="#111" stroke-width="1.800"/>',
    planitem: '<path d="M2 3H7V7H14V13H2ZM4 3V5" ' + B + '/>',
    sectlink: '<path d="M4 9V6L9 3L14 6V13H6M3 7H15" ' + B + '/><path d="M2 14Q2 10 6 9M3 9H6V12" stroke="#111" stroke-width="1.800"/>',
    sectitem: '<path d="M2 7L8 3L14 7V13H2ZM1 7H15" ' + B + '/>',
    elevlink: '<path d="M4 9V6L9 3L14 6V13H6" ' + B + '/><path d="M2 14Q2 10 6 9M3 9H6V12" stroke="#111" stroke-width="1.800"/>',
    elevitem: '<path d="M2 7L8 3L14 7V13H2Z" ' + B + '/>',
    perspitem: '<path d="M3 3L10 2V14L3 13ZM10 2L13 3V13L10 14" ' + B + '/>',
    axoitem: '<path d="M2 6L5 2H14V11L11 14H2ZM2 6H11V14M11 6L14 2" ' + B + '/>',
    maplink: '<path d="M4 2H14V14H6M4 6H14M4 10H14M8 2V14M11 2V14M4 2V9" ' + B + '/><path d="M2 14Q2 11 6 10M3 10H6V13" stroke="#111" stroke-width="1.800"/>',
    doclink: '<path d="M2 8V4H11V12H6M4 4L6 2H14V10L11 12M7 6H9V12" ' + B + '/><path d="M2 14Q2 11 6 10M3 10H6V13" stroke="#111" stroke-width="1.800"/>',
    detlink: '<circle cx="8" cy="8" r="6" ' + B + '/><path d="M7 2V14M7 6H14M7 10H14M2 8H7" ' + B + '/><path d="M2 14Q2 11 6 10M3 10H6V13" stroke="#111" stroke-width="1.800"/>',
    chevright: '<path d="M5 2L11 8L5 14" stroke="#555"/>',
    chevdown: '<path d="M2 5L8 11L14 5" stroke="#222"/>',
    newview: '<path d="M2 12V2H6V5H12V7M2 12H7" ' + B + '/><rect x="8" y="8" width="7" height="6" fill="#a9cbee" ' + B + '/>',
    savehouse: '<path d="M2 7V14H13V9M3 12L6 8L10 12M8 8H12"/><circle cx="11" cy="5" r="3.500" ' + B + '/><path d="M11 3V7M9 5H13" ' + B + '/>',
    newfolder: '<path d="M1 14V4H6L7 6M1 14H13V9"/><circle cx="11" cy="5" r="3.500" ' + B + '/><path d="M11 3V7M9 5H13" ' + B + '/>',
    clone: '<path d="M3 9V3H7V6H14V11H7M12 6L15 8" ' + B + '/><path d="M2 14Q2 10 5 10M3 9H6V12" stroke="#111" stroke-width="1.800"/>',
    layers2: '<path d="M2 6L6 3H15L11 6ZM2 6V9H11L15 6V3M2 9V12H11L15 9V6M11 6V12"/>',
    scale: '<path d="M1 6H15V11H1ZM4 9V11M7 9V11M10 9V11M13 9V11"/>',
    frame2: '<rect x="1" y="3" width="14" height="10"/><rect x="4" y="6" width="8" height="4"/>',
    zoomback: '<circle cx="8" cy="7" r="5"/><path d="M11 11L15 15M1 7H7M4 4L1 7L4 10"/>',
    zoomnext: '<circle cx="8" cy="7" r="5"/><path d="M11 11L15 15M7 7H13M10 4L13 7L10 10"/>',
    zoomin: '<circle cx="7" cy="7" r="5.500"/><path d="M11 11L15 15M4 7H10M7 4V10" stroke-width="1.500"/>',
    orbit3d: '<path d="M6 10Q0 8 3 5Q8 1 13 5Q16 8 10 10M8 5V13M6 11L8 13L10 11"/>',
    person: '<circle cx="8" cy="3" r="1.500" fill="#222"/><path d="M8 5V9L5 14M8 9L11 14M5 9L6 6L11 8"/>',
    fit: '<circle cx="7" cy="7" r="5.500"/><path d="M11 11L15 15M7 3V6M7 8V11M3 7H6M8 7H11" stroke-width="1.800"/>',
    rotate: '<path d="M2 8L6 3L9 7L5 11ZM9 3Q15 5 12 9M10 8L12 10L14 8"/>',
    override: '<path d="M1 4H7V12H1ZM8 6H15V14H8ZM4 2H12V5M10 8V12M13 8V12"/>',
    reno: '<path d="M1 13L5 6M6 2V14H14L6 5M8 12L12 12L8 8Z"/>',
    check: '<path d="M2 8L6 12L14 3" stroke-width="1.500"/>',
    curve: '<path d="M4 2L11 6Q11 11 6 14M2 5L7 2"/>',
    wand: '<path d="M7 7L14 14" stroke-width="2"/><path d="M6 1V4M1 6H4M2 2L4 4M10 2L8 4M2 10L4 8"/>',
    frag: '<path d="M2 4L7 8L2 12M9 2H13V6M9 14H13V10"/>',
    fitbox: '<path d="M1 5V1H5M11 1H15V5M15 11V15H11M5 15H1V11"/><rect x="4" y="4" width="8" height="8"/><path d="M4 11L7 7L9 10L12 7"/>',
    roofline: '<path d="M1 9L8 2L15 9" stroke-width="1.700"/><path d="M3 9V14H13V9" ' + B + ' stroke-dasharray="2 1"/>',
    pipe: '<path d="M2 3V14H14V3Q8 0 2 3Q8 6 14 3"/><path d="M8 5V14" stroke="#2f6fd0" stroke-width="1.800"/>',
    panelview: '<path d="M1 2H12V11H1ZM4 4H7V8H4M9 4V9M3 14H8"/><rect x="9" y="8" width="6" height="6" fill="#a9cbee" ' + B + '/>',
    eye: '<ellipse cx="7" cy="4" rx="6" ry="3"/><circle cx="7" cy="4" r="1.300" fill="#222"/><path d="M1 10Q7 16 12 10M12 13V9H9M13 6L15 8"/>',
    locks: '<rect x="1" y="8" width="5" height="5" rx="2"/><path d="M2 8V5Q4 3 5 5V8"/><rect x="8" y="9" width="5" height="5" rx="2"/><path d="M9 9V6Q11 1 13 4L15 9M9 2H13"/>',
    oval: '<ellipse cx="8" cy="8" rx="7" ry="3.500"/>',
    windows2: '<path d="M2 3H11V5M2 3V10H4"/><rect x="5" y="6" width="9" height="7"/><path d="M5 7H14"/>',
    start: '<path d="M0 0H7.500V7.500H0ZM8.500 0H16V7.500H8.500ZM0 8.500H7.500V16H0ZM8.500 8.500H16V16H8.500Z" fill="#5ccbf8"/>',
    mail: '<path d="M0 6L8 0L16 6V15H0Z" fill="#1669b8"/><path d="M2 4H14V9L8 13L2 9Z" fill="#fff"/><path d="M0 7L8 12L16 7V15H0Z" fill="#3aa5e8"/>',
    explorer: '<path d="M0 1H6L8 3H16V15H0Z" fill="#f4bd2f"/><path d="M0 5H16V10H0Z" fill="#ffd95c"/><path d="M3 9H13V15H10V12H6V15H3Z" fill="#2272bd"/>',
    edge: '<circle cx="8" cy="8" r="8" fill="#1878c8"/><path d="M0 8Q1 0 9 0Q16 1 16 7Q15 12 9 10Q12 7 8 5Q3 4 0 8Z" fill="#4fd08d"/><path d="M0 8Q3 3 9 6Q5 9 8 13Q11 16 14 13Q9 18 4 14Q0 12 0 8Z" fill="#1559a6"/><path d="M8 7Q5 12 14 12Q10 14 7 11Z" fill="#202020"/>',
    archicad: '<rect width="16" height="16" rx="1" fill="#3f5cb8"/><path d="M2 14Q6 2 10 3Q13 4 13 14" fill="none" stroke="#fff" stroke-width="1.500"/>',
    obs: '<circle cx="8" cy="8" r="7.300" fill="#242424" stroke="#ddd" stroke-width="1"/><path d="M8 7Q4 7 5 3M8 8Q12 7 12 11M7 9Q7 13 3 11" stroke="#ddd" stroke-width="1.400" fill="none"/><circle cx="13.500" cy="2" r="4" fill="#f40909"/>',
    chevup: '<path d="M3 11L8 6L13 11"/>',
    mic: '<rect x="6" y="1" width="4" height="9" rx="2"/><path d="M3 7Q3 12 8 12T13 7M8 12V15"/>',
    wifi: '<path d="M1 6Q8 0 15 6M3 9Q8 4 13 9M5.500 11.500Q8 9 10.500 11.500M8 13V14" stroke-width="1.400"/>',
    sound: '<path d="M1 6H4L8 2V14L4 10H1ZM10 5Q12 8 10 11M12 3Q15 8 12 13"/>',
    battery: '<path d="M1 3H6V7H4V12H14V6H7" fill="#ddd"/><path d="M14 8H16"/>',
    moon: '<path d="M9 2Q14 2 14 8Q12 15 4 13Q10 11 9 2Z"/>',
    profnew: '<path d="M8 3H2V14H12V10H6V7H9"/><circle cx="11" cy="5" r="4" ' + B + '/><path d="M11 2.500V7.500M8.500 5H13.500" ' + B + '/>',
    profdup: '<path d="M10 3H2V14H11V11H5V6H10ZM7 1H14V5H9V9H14"/>',
    rename: '<path d="M1 13L5 3L9 13M2.500 9H7.500M11 2H15M13 2V9M11 9H15"/>',
    info: '<circle cx="8" cy="8" r="6.500"/><path d="M8 7V12M8 4V5.500" stroke-width="1.800"/>',
    'section-mark': '<path d="M1 1V15M14 1V15" stroke="#777"/><path d="M4 2H11V14H4Z" fill="#ccc" stroke="#222"/><path d="M9 5L6 7L9 9L6 11" stroke="#222"/>'
};

function icon(name, cls) {
    return '<i data-icon="' + name + '" class="' + (cls || '') + '"></i>';
}

// Profiles: name | W = wall, B = beam, C = column, R = railing, O = object
var profiles = [
    'DET - Rodapé 01;W', 'DET - Rodapé 02;W', 'DET - Rodapé 02 (1);W', 'DET - Rodapé 03;W',
    'DET - Rufo com Pingadeira Dupla (Paramétrico);WBRO', 'DET - Rufo Externo (paramétrico);WBRO',
    'DET - Rufo Externo I = 10% (paramétrico);WBRO', 'DET - Rufo Externo I = 20% (paramétrico);WBRO',
    'DET - Rufo Externo I = 30% (paramétrico);WBRO', 'DET - Rufo Externo I = 40% (paramétrico);WBRO',
    'DET - Rufo Externo I = 50% (paramétrico);WBRO', 'DET -Rufo com Revestimento;WB',
    'ESC - Bocel clássico;O', 'ESC - Cobertor 300 p/ espelho inclinado 150;O', 'ESC - Degrau intertravado 150/300;O',
    'ESC - Espelho inclinado 150;O', 'ESC - Longarina em seção C;O', 'ESC - Proteção de borda c/ fita antiderrapante;O',
    'EST - Aço | Barrote;BC', 'EST - Aço | Seção C Comum (paramétrico);BC', 'EST - Aço | Seção C Enrijecida (paramétrico);BC',
    'EST - Aço | Seção I Universal (paramétrico);BC', 'EST - Aço | Seção L (paramétrico);BC', 'EST - Aço | Seção T (paramétrico);BC',
    'EST - Aço | Seção Tubular Retangular (paramétrico);BC', 'EST - Aço | Seção Z Comum (paramétrico);BC',
    'EST - Aço | Seção Z Enrijecida (paramétrico);BC', 'EST - Aço | W 250x32.7;BCO', 'EST - Laje Nervurada;B',
    'EST - Laje Nervurada (meia fôrma);B', 'EST - Pilar/Viga Concreto Armado Revestido (paramétrico);BC',
    'EST - Pilar/Viga Genérico Revestido (paramétrico);BC', 'EST - Pré-Fabricada | Laje Duplo T (paramétrico);B',
    'EST - Pré-Fabricada | Viga 01 (paramétrico);B', 'EST - Pré-Fabricada | Viga 02 (paramétrico);B',
    'EST - Pré-Fabricada | Viga T (paramétrico);B', 'EST - Sapata Corrida - Fundação (paramétrico);B', 'EST - Verga;B',
    'GC -  Madeira no metal;R', 'GC -  Perfil de madeira;R', 'GC -  Perfil de revolução p/ balaústre;R',
    'GC - Barra dupla de metal;R', 'GC - Fixação vidro;R', 'GC - Madeira simples;R', 'GC - Meio-fio;R',
    'GC - Muro com Pingadeira;R', 'GC - Rampa (paramétrico);BRO', 'LUM - Fita Led;B',
    'MAR - Armário - Divisória Interna Vertical;WBC', 'MAR - Armário - Gavetão;WB', 'MAR - Armário - Gavetão Acabamento;WB',
    'MAR - Armário - Gavetão Tampo;WB', 'MAR - Armário - Lateral Porta Por fora;WBC', 'MAR - Armário - Porta Com Puxador;WBC'
];
var uses = { W: 'wall', B: 'beam', C: 'column', R: 'rail', O: 'chair' };
var rows = '';
profiles.forEach(function (p) {
    var parts = p.split(';');
    rows += '<div class="profile-row' + (parts[0] == 'GC - Meio-fio' ? ' hover' : '') + '"><span>' + parts[0] + '</span>';
    Object.keys(uses).forEach(function (k) {
        rows += parts[1].indexOf(k) > -1 ? icon(uses[k]) : '<i></i>';
    });
    rows += '</div>';
});
document.getElementById('profiles').innerHTML = rows;

// Navigator tree: level, chevron, icon, name
var tree = [
    [0, 'right', 'folder', 'Estudo Preliminar'], [0, 'right', 'folder', 'Apresentação'], [0, 'right', 'folder', 'Projeto Legal'],
    [0, 'down', 'folder', 'Projeto Executivo'], [1, 'down', 'planlink', 'Plantas'], [2, '', 'planitem', '1. Pavimento Cobertura'],
    [2, '', 'planitem', '0. Pavimento Térreo'], [1, 'right', 'planlink', 'Piso'], [1, 'right', 'planlink', 'Forro'],
    [1, 'down', 'sectlink', 'Cortes'], [2, '', 'sectitem', 'EP01 A'], [2, '', 'sectitem', 'EP03 B'],
    [1, 'down', 'elevlink', 'Elevações'], [2, '', 'elevitem', 'EP 1'], [2, '', 'elevitem', 'EP 2'], [2, '', 'elevitem', 'EP 3'],
    [2, '', 'elevitem', 'EP 4'], [0, 'right', 'folder', 'Checagem do Modelo'], [0, 'down', 'folder', 'Perspectivas'],
    [1, '', 'perspitem', 'Perspectiva Cônica Genérica'], [1, '', 'axoitem', 'Perspectiva Axonométrica Genérica'],
    [1, '', 'perspitem', 'Modelo Branco'], [0, 'right', 'maplink', 'Mapas'], [0, 'right', 'doclink', 'Documentos 3D'],
    [0, '', 'detlink', 'Detalhes']
];
document.getElementById('tree').innerHTML = tree.map(function (t) {
    return '<div class="tree-row level' + t[0] + (t[3] == '0. Pavimento Térreo' ? ' current' : '') + '">' +
        (t[1] ? icon('chev' + t[1], 'chev') : '<i class="chev"></i>') + icon(t[2]) + t[3] + '</div>';
}).join('');

document.querySelectorAll('[data-icon]').forEach(function (el) {
    el.innerHTML = '<svg viewBox="0 0 16 16">' + icons[el.dataset.icon] + '</svg>';
});
```
